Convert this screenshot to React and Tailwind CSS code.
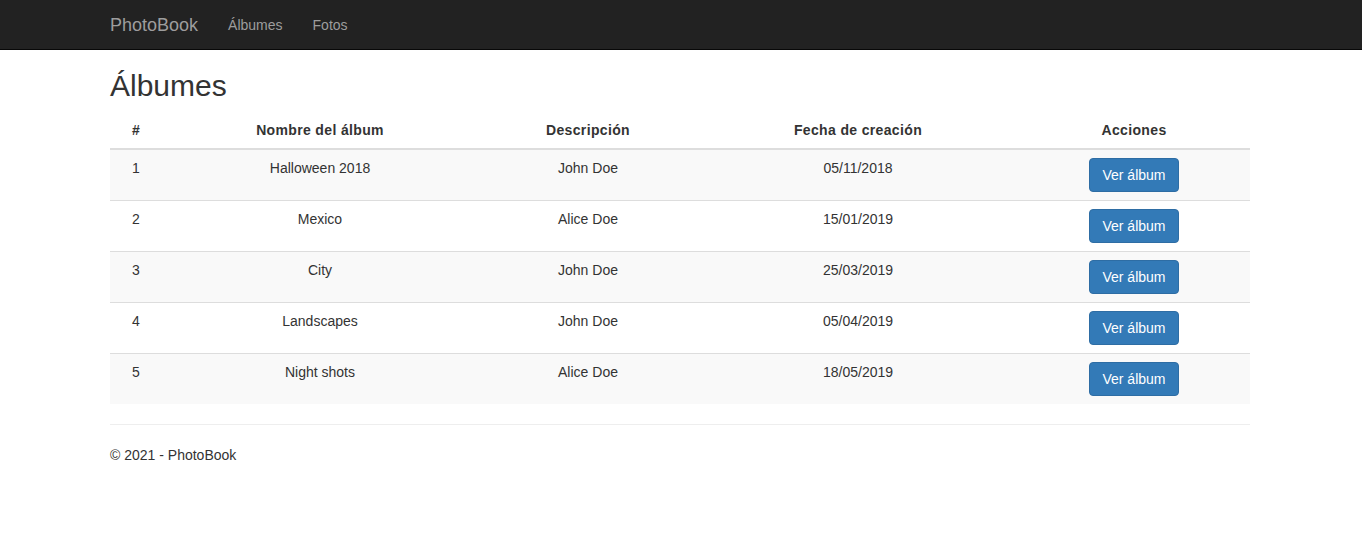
import React from 'react';

const albums = [
  { id: 1, name: 'Halloween 2018', owner: 'John Doe', date: '05/11/2018' },
  { id: 2, name: 'Mexico', owner: 'Alice Doe', date: '15/01/2019' },
  { id: 3, name: 'City', owner: 'John Doe', date: '25/03/2019' },
  { id: 4, name: 'Landscapes', owner: 'John Doe', date: '05/04/2019' },
  { id: 5, name: 'Night shots', owner: 'Alice Doe', date: '18/05/2019' },
];

const App = () => {
  return (
    <div className="min-h-screen bg-white text-[14px] leading-[20px] text-[#333] font-['Liberation_Sans',Arial,sans-serif]">
      {/* Navbar */}
      <nav className="h-[50px] bg-[#222] border-b border-[#080808]">
        <div className="w-[1170px] mx-auto pl-[14px] pr-[16px] flex items-center h-full">
          <a href="#" className="text-[18px] leading-[20px] text-[#9d9d9d] py-[15px] pr-[15px]">PhotoBook</a>
          <a href="#" className="text-[#9d9d9d] px-[15px] py-[15px]">Álbumes</a>
          <a href="#" className="text-[#9d9d9d] px-[15px] py-[15px]">Fotos</a>
        </div>
      </nav>

      <div className="w-[1170px] mx-auto pl-[14px] pr-[16px]">
        <h2 className="text-[30px] leading-[33px] font-normal mt-[19px] mb-[10px]">Álbumes</h2>

        <table className="w-full border-collapse mb-[20px] text-center">
          <thead>
            <tr className="tracking-[0.35px]">
              <th className="w-[52px] p-[8px] font-bold border-b-2 border-[#ddd]">#</th>
              <th className="w-[316px] p-[8px] font-bold border-b-2 border-[#ddd]">Nombre del álbum</th>
              <th className="w-[220px] p-[8px] font-bold border-b-2 border-[#ddd]">Descripción</th>
              <th className="w-[320px] p-[8px] font-bold border-b-2 border-[#ddd]">Fecha de creación</th>
              <th className="w-[232px] p-[8px] font-bold border-b-2 border-[#ddd]">Acciones</th>
            </tr>
          </thead>
          <tbody>
            {albums.map((a, i) => (
              <tr key={a.id} className={i % 2 === 0 ? 'bg-[#f9f9f9]' : 'bg-white'}>
                <td className={`p-[8px] align-top ${i > 0 ? 'border-t border-[#ddd]' : ''}`}>{a.id}</td>
                <td className={`p-[8px] align-top ${i > 0 ? 'border-t border-[#ddd]' : ''}`}>{a.name}</td>
                <td className={`p-[8px] align-top ${i > 0 ? 'border-t border-[#ddd]' : ''}`}>{a.owner}</td>
                <td className={`p-[8px] align-top ${i > 0 ? 'border-t border-[#ddd]' : ''}`}>{a.date}</td>
                <td className={`p-[8px] align-top ${i > 0 ? 'border-t border-[#ddd]' : ''}`}>
                  <button className="px-[12px] py-[6px] text-white bg-[#337ab7] border border-[#2e6da4] rounded-[4px] leading-[20px]">
                    Ver álbum
                  </button>
                </td>
              </tr>
            ))}
          </tbody>
        </table>

        <hr className="mt-[20px] mb-[20px] border-0 border-t border-[#eee]" />
        <footer>
          <p className="mb-[10px]">© 2021 - PhotoBook</p>
        </footer>
      </div>
    </div>
  );
};

export default App;
